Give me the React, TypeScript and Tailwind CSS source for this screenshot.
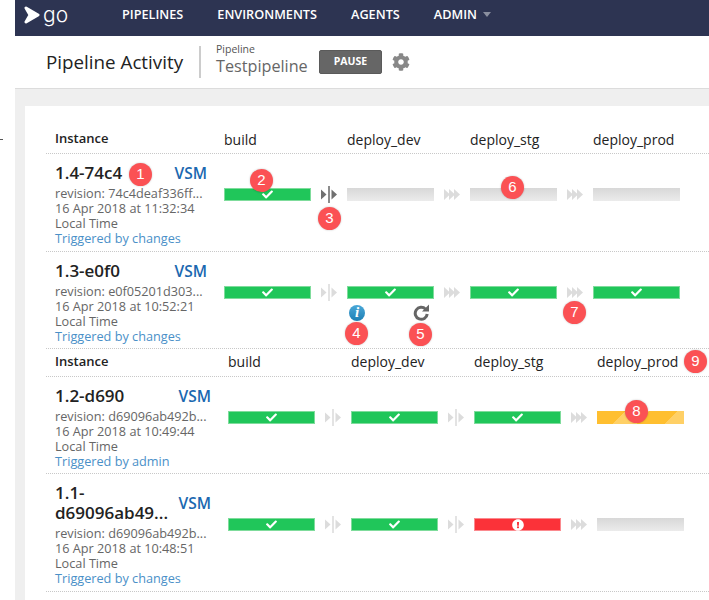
import React from 'react';
import { FaCheck, FaCog, FaExclamationCircle } from 'react-icons/fa';

type Status = 'passed' | 'failed' | 'building' | 'idle';
type Gate = 'manual' | 'manualActive' | 'auto';

interface Stage { status: Status; gate?: Gate; actions?: boolean; }
interface Instance { name: React.ReactNode; revision: string; time: string; trigger: string; badge?: React.ReactNode; stages: Stage[]; h: string; }

const Badge = ({ n, className }: { n: number; className: string }) => (
  <span className={`absolute z-10 flex h-[23px] w-[23px] items-center justify-center rounded-full bg-[#fb5154] font-['Liberation_Sans',sans-serif] text-[15px] font-normal text-white shadow-[0_0_2px_rgba(0,0,0,0.25)] ${className}`}>{n}</span>
);

const AutoGate = () => (
  <svg width="16" height="11" viewBox="0 0 16 11" fill="#dcdcdc"><path d="M0 0l6 5.500-6 5.500zM5 0l6 5.500-6 5.500zM10 0l6 5.500-6 5.500z" /></svg>
);

const ManualGate = ({ active }: { active?: boolean }) => (
  <svg width="16" height="17" viewBox="0 0 16 17" fill={active ? '#707070' : '#dcdcdc'}>
    <path d="M0 3.500l5.500 5-5.500 5zM16 8.500l-5.500-5v10z" />
    <rect x="7.200" y="0" width="1.600" height="17" />
  </svg>
);

const RedoIcon = () => (
  <svg width="17" height="17" viewBox="0 0 17 17" fill="none" className="mt-[5px]">
    <path d="M12.600 5.200A6 6 0 1 0 14.200 10" stroke="#666" strokeWidth="3" />
    <path d="M16 0.500v7h-7z" fill="#666" />
  </svg>
);

const Bar = ({ status }: { status: Status }) => {
  if (status === 'passed') return (
    <div className="flex h-[13px] w-[87px] items-center justify-center border border-[#7fdc9c] bg-[#20c65a] text-white"><FaCheck size={11} /></div>
  );
  if (status === 'failed') return (
    <div className="flex h-[13px] w-[87px] items-center justify-center border border-[#fb8a8f] bg-[#fb3239] text-white"><FaExclamationCircle size={12} /></div>
  );
  if (status === 'building') return (
    <div className="h-[13px] w-[87px] bg-[linear-gradient(135deg,#ffbf30_0,#ffbf30_28%,#ffd066_28%,#ffd066_52%,#ffbf30_52%,#ffbf30_80%,#ffd066_80%)]" />
  );
  return <div className="h-[13px] w-[87px] bg-gradient-to-b from-[#d8d8d8] to-[#ebebeb]" />;
};

const StageCell = ({ stage, children }: { stage: Stage; children?: React.ReactNode }) => (
  <div className="relative flex w-[123px] shrink-0 items-center">
    <div className="flex w-[87px] flex-col">
      <Bar status={stage.status} />
      <div className="flex h-[16px] items-start justify-between pl-[2px] pr-[4px]">
        {stage.actions && (
          <>
            <span className="mt-[6px] flex h-[16px] w-[16px] items-center justify-center rounded-full bg-gradient-to-b from-[#4aa8d8] to-[#1c7fb4] font-['Liberation_Serif',serif] text-[15px] font-bold italic text-white">i</span>
            <RedoIcon />
          </>
        )}
      </div>
    </div>
    <div className="-mt-[16px] flex w-[36px] justify-center">
      {stage.gate === 'auto' && <AutoGate />}
      {stage.gate === 'manual' && <ManualGate />}
      {stage.gate === 'manualActive' && <ManualGate active />}
    </div>
    {children}
  </div>
);

const InstanceRow = ({ inst, col, badges }: { inst: Instance; col: string; badges?: Record<number, React.ReactNode> }) => (
  <div className={`flex border-b border-dotted border-[#c8c8c8] ${inst.h}`}>
    <div className={`relative flex shrink-0 flex-col pl-[9px] pr-[17px] pt-[9px] ${col}`}>
      <div className="flex items-center justify-between">
        <div className="text-[17px] font-semibold leading-[20px] text-[#222]">{inst.name}</div>
        <a className="text-[15.500px] font-semibold leading-[20px] text-[#1a68b0]">VSM</a>
      </div>
      <div className="mt-[3px] whitespace-nowrap text-[12.700px] leading-[15px] text-[#666]">
        <div>{inst.revision}</div>
        <div>{inst.time}</div>
        <div>Local Time</div>
        <a className="text-[#4a90c8]">{inst.trigger}</a>
      </div>
      {inst.badge}
    </div>
    {inst.stages.map((s, i) => <StageCell key={i} stage={s}>{badges?.[i]}</StageCell>)}
  </div>
);

const HeaderRow = ({ col, h, children }: { col: string; h: string; children?: React.ReactNode }) => (
  <div className={`flex items-center border-b border-dotted border-[#c8c8c8] pb-[2px] text-[14px] text-[#222] ${h}`}>
    <div className={`shrink-0 pl-[9px] text-[13px] font-semibold ${col}`}>Instance</div>
    {['build', 'deploy_dev', 'deploy_stg', 'deploy_prod'].map((n, i) => (
      <div key={n} className="relative w-[123px] shrink-0">{n}{i === 3 && children}</div>
    ))}
  </div>
);

const first: Instance[] = [
  {
    name: '1.4-74c4', revision: 'revision: 74c4deaf336ff...', time: '16 Apr 2018 at 11:32:34', trigger: 'Triggered by changes', h: 'h-[98px]',
    badge: <Badge n={1} className="left-[83px] top-[9px]" />,
    stages: [{ status: 'passed', gate: 'manualActive' }, { status: 'idle', gate: 'auto' }, { status: 'idle', gate: 'auto' }, { status: 'idle' }],
  },
  {
    name: '1.3-e0f0', revision: 'revision: e0f05201d303...', time: '16 Apr 2018 at 10:52:21', trigger: 'Triggered by changes', h: 'h-[97px]',
    stages: [{ status: 'passed', gate: 'manual' }, { status: 'passed', gate: 'auto', actions: true }, { status: 'passed', gate: 'auto' }, { status: 'passed' }],
  },
];

const second: Instance[] = [
  {
    name: '1.2-d690', revision: 'revision: d69096ab492b...', time: '16 Apr 2018 at 10:49:44', trigger: 'Triggered by admin', h: 'h-[97px]',
    stages: [{ status: 'passed', gate: 'manual' }, { status: 'passed', gate: 'manual' }, { status: 'passed', gate: 'auto' }, { status: 'building' }],
  },
  {
    name: <>1.1-<br />d69096ab49...</>, revision: 'revision: d69096ab492b...', time: '16 Apr 2018 at 10:48:51', trigger: 'Triggered by changes', h: 'h-[118px]',
    stages: [{ status: 'passed', gate: 'manual' }, { status: 'passed', gate: 'manual' }, { status: 'failed', gate: 'auto' }, { status: 'idle' }],
  },
];

export default function App() {
  return (
    <div className="flex h-[600px] w-[709px] overflow-hidden bg-white font-['Open_Sans',sans-serif]">
      <div className="w-[15px] shrink-0 pt-[139px]">
        <div className="h-px w-[3px] bg-[#555]" />
      </div>
      <div className="flex min-w-0 flex-1 flex-col">
        <nav className="flex h-[36px] shrink-0 items-center bg-[#2d3452] pb-[6px] text-white">
          <div className="flex w-[107px] items-center pl-[9px]">
            <svg width="16" height="18" viewBox="0 0 16 18">
              <path d="M2 2l12 7-12 7 4-7z" fill="#fff" stroke="#fff" strokeWidth="3" strokeLinejoin="round" />
            </svg>
            <span className="ml-[3px] font-['Inter',sans-serif] text-[21px] font-light leading-[24px]">go</span>
          </div>
          <div className="flex items-center gap-[34px] text-[12.700px] font-semibold">
            <span>PIPELINES</span>
            <span>ENVIRONMENTS</span>
            <span>AGENTS</span>
            <span className="flex items-center gap-[6px]">ADMIN
              <span className="h-0 w-0 border-x-[4px] border-t-[5px] border-x-transparent border-t-[#8a8f9f]" />
            </span>
          </div>
        </nav>
        <header className="flex h-[53px] shrink-0 items-center border-b border-[#dcdcdc] pl-[31px]">
          <h1 className="w-[153px] text-[18.800px] leading-none text-[#222]">Pipeline Activity</h1>
          <div className="h-[32px] w-[2px] bg-[#ccc]" />
          <div className="mb-[6px] ml-[15px] w-[103px]">
            <div className="text-[10.500px] leading-[13px] text-[#555]">Pipeline</div>
            <div className="text-[16.200px] leading-[20px] text-[#666]">Testpipeline</div>
          </div>
          <button className="h-[24px] w-[63px] rounded-[2px] border border-[#5a5a5a] bg-[#666] text-[10.500px] font-bold text-white">PAUSE</button>
          <FaCog size={18} className="ml-[10px] text-[#888]" />
        </header>
        <main className="flex-1 bg-[#efefef] pl-[10px] pt-[17px]">
          <div className="h-full bg-white pl-[21px] pt-[21px]">
            <HeaderRow col="w-[178px]" h="h-[27px]" />
            <div className="relative">
              <InstanceRow inst={first[0]} col="w-[178px]" badges={{
                0: <Badge n={2} className="left-[26px] top-[15px]" />,
                1: <Badge n={3} className="left-[-29px] top-[53px]" />,
                2: <Badge n={6} className="left-[31px] top-[22px]" />,
              }} />
              <InstanceRow inst={first[1]} col="w-[178px]" badges={{
                1: <Badge n={4} className="left-[-2px] top-[70px]" />,
                2: <Badge n={7} className="left-[93px] top-[49px]" />,
              }} />
              <Badge n={5} className="left-[363px] top-[169px]" />
            </div>
            <HeaderRow col="w-[182px]" h="h-[28px]">
              <Badge n={9} className="left-[87px] top-[-1px]" />
            </HeaderRow>
            <InstanceRow inst={second[0]} col="w-[182px]" badges={{ 3: <Badge n={8} className="left-[28px] top-[23px]" /> }} />
            <InstanceRow inst={second[1]} col="w-[182px]" />
          </div>
        </main>
      </div>
    </div>
  );
}
